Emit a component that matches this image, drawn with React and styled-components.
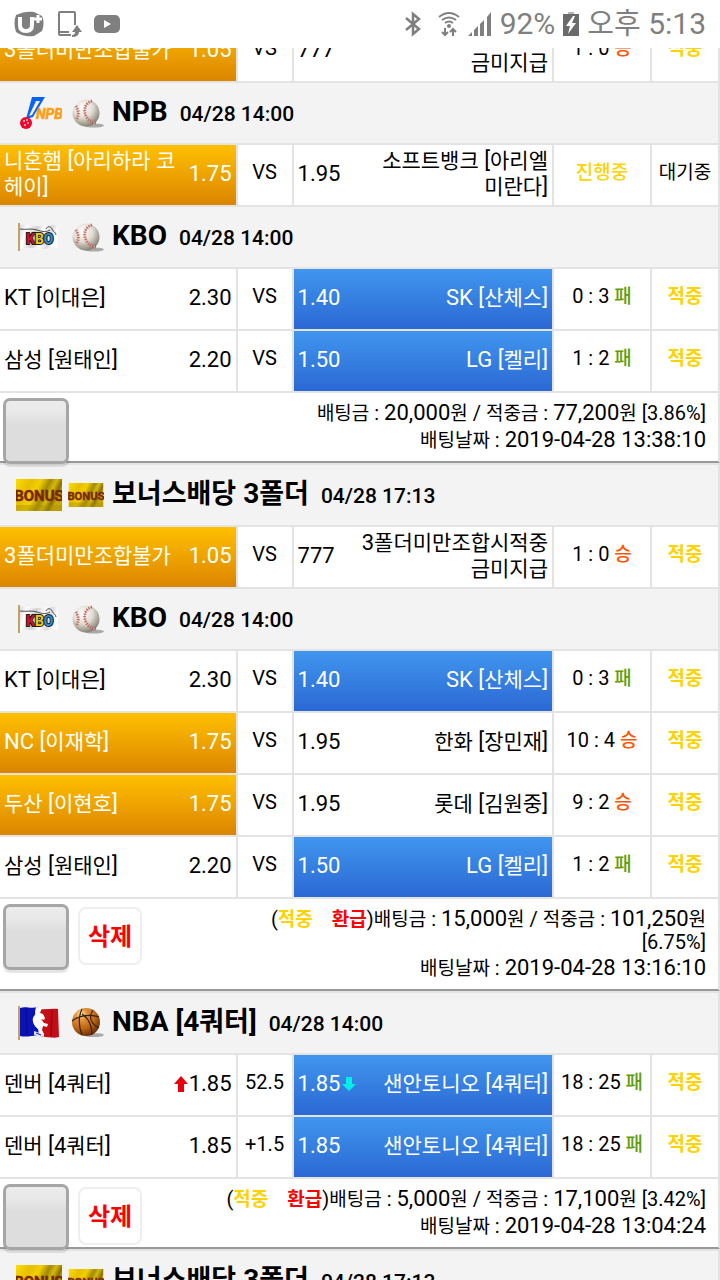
import React from 'react';
import styled, { createGlobalStyle } from 'styled-components';

const colors = {
	line: '#e3e3e3',
	head: '#f3f3f3',
	yellow: '#ffd200',
	red: '#ff0000',
	win: '#ff5500',
	lose: '#5f9c0a',
	bar: '#7f7f7f',
};

const slips = [
	{
		id: 1,
		games: [
			{
				rows: [
					{
						home: ['3폴더미만조합불가', '1.05'],
						away: ['3폴더미만조합시적중금미지급', '777'],
						mid: 'VS',
						score: '1 : 0',
						result: '승',
						pick: 'home',
						status: '적중',
					},
				],
			},
			{
				league: 'NPB',
				date: '04/28 14:00',
				rows: [
					{
						home: ['니혼햄 [아리하라 코헤이]', '1.75'],
						away: ['소프트뱅크 [아리엘 미란다]', '1.95'],
						mid: 'VS',
						pick: 'home',
						status: '대기중',
					},
				],
			},
			{
				league: 'KBO',
				date: '04/28 14:00',
				rows: [
					{
						home: ['KT [이대은]', '2.30'],
						away: ['SK [산체스]', '1.40'],
						mid: 'VS',
						score: '0 : 3',
						result: '패',
						pick: 'away',
						status: '적중',
					},
					{
						home: ['삼성 [원태인]', '2.20'],
						away: ['LG [켈리]', '1.50'],
						mid: 'VS',
						score: '1 : 2',
						result: '패',
						pick: 'away',
						status: '적중',
					},
				],
			},
		],
		bet: '20,000',
		prize: '77,200',
		rate: '3.86',
		betDate: '2019-04-28 13:38:10',
	},
	{
		id: 2,
		games: [
			{
				league: 'BONUS',
				title: '보너스배당 3폴더',
				date: '04/28 17:13',
				rows: [
					{
						home: ['3폴더미만조합불가', '1.05'],
						away: ['3폴더미만조합시적중금미지급', '777'],
						mid: 'VS',
						score: '1 : 0',
						result: '승',
						pick: 'home',
						status: '적중',
					},
				],
			},
			{
				league: 'KBO',
				date: '04/28 14:00',
				rows: [
					{
						home: ['KT [이대은]', '2.30'],
						away: ['SK [산체스]', '1.40'],
						mid: 'VS',
						score: '0 : 3',
						result: '패',
						pick: 'away',
						status: '적중',
					},
					{
						home: ['NC [이재학]', '1.75'],
						away: ['한화 [장민재]', '1.95'],
						mid: 'VS',
						score: '10 : 4',
						result: '승',
						pick: 'home',
						status: '적중',
					},
					{
						home: ['두산 [이현호]', '1.75'],
						away: ['롯데 [김원중]', '1.95'],
						mid: 'VS',
						score: '9 : 2',
						result: '승',
						pick: 'home',
						status: '적중',
					},
					{
						home: ['삼성 [원태인]', '2.20'],
						away: ['LG [켈리]', '1.50'],
						mid: 'VS',
						score: '1 : 2',
						result: '패',
						pick: 'away',
						status: '적중',
					},
				],
			},
		],
		done: true,
		bet: '15,000',
		prize: '101,250',
		rate: '6.75',
		betDate: '2019-04-28 13:16:10',
	},
	{
		id: 3,
		games: [
			{
				league: 'NBA',
				title: 'NBA [4쿼터]',
				date: '04/28 14:00',
				rows: [
					{
						home: ['덴버 [4쿼터]', '1.85', 'up'],
						away: ['샌안토니오 [4쿼터]', '1.85', 'down'],
						mid: '52.5',
						score: '18 : 25',
						result: '패',
						pick: 'away',
						status: '적중',
					},
					{
						home: ['덴버 [4쿼터]', '1.85'],
						away: ['샌안토니오 [4쿼터]', '1.85'],
						mid: '+1.5',
						score: '18 : 25',
						result: '패',
						pick: 'away',
						status: '적중',
					},
				],
			},
		],
		done: true,
		bet: '5,000',
		prize: '17,100',
		rate: '3.42',
		betDate: '2019-04-28 13:04:24',
	},
	{
		id: 4,
		games: [
			{
				league: 'BONUS',
				title: '보너스배당 3폴더',
				date: '04/28 17:13',
				rows: [],
			},
		],
	},
];

// hangul looks too big next to the latin digits, so it gets its own size
const Mixed = ({ text, size }) =>
	text.split(/([가-힣]+)/).map((part, i) =>
		/[가-힣]/.test(part) ? (
			<Hangul size={size} key={i}>
				{part}
			</Hangul>
		) : (
			part
		)
	);

const Baseball = () => (
	<svg width="36" height="32" viewBox="0 0 36 32">
		<defs>
			<radialGradient id="ball" cx="0.38" cy="0.3" r="0.75">
				<stop offset="0" stopColor="#ffffff" />
				<stop offset="0.5" stopColor="#e0dcd3" />
				<stop offset="1" stopColor="#7d786c" />
			</radialGradient>
		</defs>
		<ellipse cx="26" cy="28.5" rx="10" ry="2" fill="#a9a9a9" />
		<circle cx="18" cy="16" r="13.5" fill="url(#ball)" />
		<path
			d="M24 4C17 6 15 13 18 19c2 4 5 6 10 7M8 9c3 5 3 10 0 14"
			fill="none"
			stroke="#d9a79b"
			strokeWidth="1"
		/>
		<path
			d="M24 4C17 6 15 13 18 19c2 4 5 6 10 7M8 9c3 5 3 10 0 14"
			fill="none"
			stroke="#b8453a"
			strokeWidth="3"
			strokeDasharray="1 1.500"
			opacity="0.8"
		/>
	</svg>
);

const Basketball = () => (
	<svg width="36" height="32" viewBox="0 0 36 32">
		<defs>
			<radialGradient id="basket" cx="0.32" cy="0.22" r="0.85">
				<stop offset="0" stopColor="#ffe2ae" />
				<stop offset="0.25" stopColor="#e2923a" />
				<stop offset="0.6" stopColor="#bf6717" />
				<stop offset="1" stopColor="#5d2806" />
			</radialGradient>
		</defs>
		<ellipse cx="26" cy="28" rx="10" ry="2" fill="#a9a9a9" />
		<circle cx="18" cy="15" r="14" fill="url(#basket)" />
		<path
			d="M4 14c8-6 19-7 27-4M14 2c-4 8-3 18 0 26M14 7c6 4 10 12 10 21M25 3c-5 7-2 14 6 18"
			fill="none"
			stroke="#33200f"
			strokeWidth="1.2"
		/>
	</svg>
);

const BonusArt = ({ width, height, id }) => (
	<svg width={width} height={height} viewBox="0 0 46 32">
		<defs>
			<linearGradient id={id} x1="0" y1="0" x2="1" y2="0.35">
				<stop offset="0" stopColor="#ffdc00" />
				<stop offset="0.3" stopColor="#e5bf00" />
				<stop offset="0.5" stopColor="#f3d000" />
				<stop offset="0.68" stopColor="#a08a08" />
				<stop offset="0.8" stopColor="#d8b90a" />
				<stop offset="0.92" stopColor="#857107" />
				<stop offset="1" stopColor="#c9a800" />
			</linearGradient>
		</defs>
		<rect width="46" height="32" fill={`url(#${id})`} />
		<rect y="26" width="46" height="6" fill="#a58b05" opacity="0.4" />
		<NarrowText
			x="23"
			y="22"
			size={15}
			textAnchor="middle"
			fill="#7a2600"
			stroke="#7a2600"
			strokeWidth="0.5">
			BONUS
		</NarrowText>
	</svg>
);

const NpbLogo = () => (
	<svg width="46" height="38" viewBox="0 0 46 38">
		<path d="M16 3h13L17 23l-7 2z" fill="#0a62f5" />
		<path d="M20 7h4l-8 14-3 1z" fill="#f3f3f3" />
		<circle cx="10" cy="29" r="6" fill="#f0052f" />
		<g fill="#ffc3cd">
			<circle cx="8" cy="27" r="1" />
			<circle cx="11" cy="26" r="1" />
			<circle cx="12" cy="29" r="1" />
			<circle cx="9" cy="31" r="1" />
		</g>
		<NarrowText
			x="20"
			y="25"
			size={14}
			fontStyle="italic"
			fill="#ff9c12"
			stroke="#ff9c12"
			strokeWidth="0.5">
			NPB
		</NarrowText>
	</svg>
);

const KboFlag = () => (
	<svg width="46" height="32" viewBox="0 0 46 32">
		<defs>
			<linearGradient id="cloth" x1="0" y1="0" x2="1" y2="0.2">
				<stop offset="0" stopColor="#d8d8d8" />
				<stop offset="0.2" stopColor="#ffffff" />
				<stop offset="0.45" stopColor="#cfcfcf" />
				<stop offset="0.65" stopColor="#ffffff" />
				<stop offset="0.85" stopColor="#dcdcdc" />
				<stop offset="1" stopColor="#ffffff" />
			</linearGradient>
		</defs>
		<path
			d="M4 4c7-2 12 2 20 1s11-2 18 0v22c-7-2-12 2-19 1s-12-2-19 0z"
			fill="url(#cloth)"
		/>
		<rect x="2" y="2" width="2" height="28" fill="#c0a265" />
		<path
			d="M4 8c6 1 12-1 17 1s10 2 13 0M30 8c1-3 5-3 6 0s4 3 4 6"
			fill="none"
			stroke="#4a4a4a"
			strokeWidth="1"
		/>
		<ArtText
			x="10"
			y="23"
			size={14}
			stroke="#1d1d1d"
			strokeWidth="2"
			paintOrder="stroke">
			<tspan fill="#d3122e">K</tspan>
			<tspan fill="#e2cc22">B</tspan>
			<tspan fill="#2b8fd0">O</tspan>
		</ArtText>
	</svg>
);

const NbaFlag = () => (
	<svg width="46" height="36" viewBox="0 0 46 36">
		<path d="M4 3c6-2 10 1 18-1l4 29c-7-2-14 2-22 0z" fill="#0a13b8" />
		<path d="M24 4c6 1 12-1 18 0l1 28c-7 2-12-1-19 0z" fill="#c60d16" />
		<path
			d="M20 2l6 1-2 5 3 1 2 4-1 2-3-1 3 4 4 1-1 3-4-1-1 4 2 4v3l-5-3-1-5c-4-3-6-7-5-11 1-3 3-3 2-6z"
			fill="#ffffff"
		/>
		<path d="M18 26l9 3-1 4-8-3z" fill="#dfe3ff" />
		<path d="M20 28l5 2" stroke="#1019b4" strokeWidth="1" />
		<path d="M10 3l1 28M36 5l-1 26" stroke="#000" strokeWidth="2" opacity="0.2" />
		<rect x="2" y="1" width="2" height="34" fill="#c0a265" />
	</svg>
);

const Arrow = ({ dir }) =>
	dir === 'up' ? (
		<svg width="14" height="16" viewBox="0 0 14 16">
			<path d="M7 0l7 8h-4v8H4V8H0z" fill="#e8000d" />
		</svg>
	) : (
		<svg width="14" height="16" viewBox="0 0 14 16">
			<path d="M4 1h6v7h4l-7 7-7-7h4z" fill="#00f0e8" />
		</svg>
	);

const leagueArt = {
	NPB: [<NpbLogo key="a" />, <Baseball key="b" />],
	KBO: [<KboFlag key="a" />, <Baseball key="b" />],
	NBA: [<NbaFlag key="a" />, <Basketball key="b" />],
	BONUS: [
		<BonusArt key="a" width={46} height={32} id="gold" />,
		<BonusArt key="b" width={36} height={24} id="goldSmall" />,
	],
};

const StatusBar = () => (
	<Bar>
		<BarSide>
			<svg width="30" height="26" viewBox="0 0 30 26" fill={colors.bar}>
				<path d="M2 4C8 1 15 0 20 1l8 4c2 4 2 10 0 15l-8 5C13 26 8 25 2 21 0 15 0 9 2 4z" />
				<path
					d="M6 6v8q0 6 6 6t6-6V6"
					fill="none"
					stroke="#fff"
					strokeWidth="4"
				/>
				<path
					d="M24 4v8M20 8h8"
					stroke="#fff"
					strokeWidth="3"
					fill="none"
				/>
			</svg>
			<svg
				width="26"
				height="28"
				viewBox="0 0 26 28"
				fill="none"
				stroke={colors.bar}
				strokeWidth="2">
				<path d="M19 15V3q0-1-1-1H4Q3 2 3 3v21q0 1 1 1h11M3 22h10" />
				<path
					d="M21 15l5 7h-3q0 5-7 5v-2q3 0 3-3h-3z"
					fill={colors.bar}
					stroke="none"
				/>
			</svg>
			<svg width="26" height="20" viewBox="0 0 26 20">
				<rect y="1" width="26" height="18" rx="5" fill={colors.bar} />
				<path d="M10 6l7 4-7 4z" fill="#fff" />
			</svg>
		</BarSide>
		<BarSide right>
			<svg
				width="18"
				height="26"
				viewBox="0 0 18 26"
				fill="none"
				stroke={colors.bar}
				strokeWidth="2.5">
				<path d="M2 7l13 11-6 5V3l6 5L2 19" />
			</svg>
			<BarGap />
			<svg
				width="22"
				height="26"
				viewBox="0 0 22 26"
				fill="none"
				stroke={colors.bar}
				strokeWidth="2">
				<path d="M1 6q10-8 20 0M4 9q7-5 14 0M7 12q4-3 8 0" />
				<circle cx="11" cy="15" r="1" fill={colors.bar} />
				<path d="M7 17v7M4 21l3 3 3-3M15 25v-7M12 21l3-3 3 3" />
			</svg>
			<svg width="24" height="26" viewBox="0 0 24 26" fill={colors.bar}>
				<path d="M0 25l4-4v4zM6 25v-6l4-4v10zM12 25V13l4-4v16zM19 25V6l4-5v24z" />
			</svg>
			<span>92%</span>
			<svg width="16" height="26" viewBox="0 0 16 26">
				<rect x="5" y="1" width="6" height="2" fill="#b5b5b5" />
				<rect y="3" width="16" height="22" fill="#6b6b6b" />
				<path d="M10 5l-7 10h4l-2 8 8-11H9l3-7z" fill="#fff" />
			</svg>
			<span>
				<Mixed text="오후 5:13" size={29} />
			</span>
		</BarSide>
	</Bar>
);

const Team = ({ team, away, picked }) => {
	const [name, odds, move] = team;
	const price = (
		<Odds>
			{!away && move && <Arrow dir={move} />}
			<span>{odds}</span>
			{away && move && <Arrow dir={move} />}
		</Odds>
	);

	return (
		<TeamCell tone={picked ? (away ? 'blue' : 'gold') : 'none'}>
			<TeamInner away={away}>
				{away && price}
				<TeamName away={away}>
					<Mixed text={name} size={21} />
				</TeamName>
				{!away && price}
			</TeamInner>
		</TeamCell>
	);
};

const Game = ({ game }) => (
	<tbody>
		{game.league && (
			<tr>
				<LeagueCell colSpan={5} scope="colgroup">
					<League>
						<LeagueIcon wide>{leagueArt[game.league][0]}</LeagueIcon>
						<LeagueIcon>{leagueArt[game.league][1]}</LeagueIcon>
						<LeagueTitle>
							<Mixed text={game.title || game.league} size={27} />
							<LeagueDate>{game.date}</LeagueDate>
						</LeagueTitle>
					</League>
				</LeagueCell>
			</tr>
		)}
		{game.rows.map((row, i) => (
			<tr key={i}>
				<Team team={row.home} picked={row.pick === 'home'} />
				<Cell>{row.mid}</Cell>
				<Team team={row.away} away picked={row.pick === 'away'} />
				<Cell>
					{row.score ? (
						<>
							{row.score}{' '}
							<Mark tone={row.result === '승' ? 'win' : 'lose'} weight={500}>
								{row.result}
							</Mark>
						</>
					) : (
						<Mark tone="yellow" weight={500}>
							진행중
						</Mark>
					)}
				</Cell>
				<Cell>
					{row.status === '적중' ? (
						<Mark tone="yellow" weight={700}>
							적중
						</Mark>
					) : (
						<Mark>{row.status}</Mark>
					)}
				</Cell>
			</tr>
		))}
	</tbody>
);

const Slip = ({ slip }) => (
	<section>
		<Games>
			<colgroup>
				<col className="home" />
				<col className="mid" />
				<col className="away" />
				<col className="score" />
				<col className="status" />
			</colgroup>
			{slip.games.map((g, i) => (
				<Game game={g} key={i} />
			))}
		</Games>
		{slip.bet && (
			<Foot>
				<Check type="checkbox" aria-label={`배팅 ${slip.id}`} />
				{slip.done && <Delete type="button">삭제</Delete>}
				<Summary>
					<p>
						{slip.done && (
							<>
								(
								<Mark tone="yellow" weight={700}>
									적중
								</Mark>
								<Refund>환급</Refund>)
							</>
						)}
						<Hangul size={19}>배팅금</Hangul> : <Big>{slip.bet}</Big>
						<Hangul size={19}>원</Hangul> /{' '}
						<Hangul size={19}>적중금</Hangul> : <Big>{slip.prize}</Big>
						<Hangul size={19}>원</Hangul> [{slip.rate}%]
					</p>
					<p>
						<Hangul size={19}>배팅날짜</Hangul> : <Big>{slip.betDate}</Big>
					</p>
				</Summary>
			</Foot>
		)}
	</section>
);

const App = () => (
	<Screen>
		<GlobalStyle />
		<StatusBar />
		<Scroller>
			<List>
				{slips.map((s) => (
					<Slip slip={s} key={s.id} />
				))}
			</List>
		</Scroller>
	</Screen>
);

const GlobalStyle = createGlobalStyle`
	* {
		box-sizing: border-box;
	}
	body {
		margin: 0;
		background: white;
		color: black;
		font-family: Roboto, 'Noto Sans CJK KR', sans-serif;
		font-size: 20px;
	}
	p {
		margin: 0;
	}
	svg {
		display: block;
		flex: none;
	}
`;

const Screen = styled.main`
	height: 100vh;
	display: flex;
	flex-direction: column;
`;

const Bar = styled.header`
	flex: none;
	height: 48px;
	padding: 0 14px;
	display: flex;
	align-items: center;
	justify-content: space-between;
	background: white;
	color: ${colors.bar};
	font-size: 30px;
	line-height: 48px;
`;

const BarSide = styled.div`
	display: flex;
	align-items: center;
	gap: ${({ right }) => (right ? '8px' : '12px')};
`;

const BarGap = styled.span`
	width: 0;
`;

const Scroller = styled.div`
	flex: 1;
	min-height: 0;
	overflow-y: auto;
	scrollbar-width: none;
`;

const List = styled.div`
	margin-top: -29px;
`;

const Games = styled.table`
	width: 100%;
	table-layout: fixed;
	border-collapse: separate;
	border-spacing: 0;
	border-top: 2px solid ${colors.line};
	.home {
		width: 33%;
	}
	.mid {
		width: 56px;
	}
	.score {
		width: 98px;
	}
	.status {
		width: 68px;
	}
`;

const Cell = styled.td`
	height: 62px;
	padding: 0 0 6px;
	border-right: 2px solid ${colors.line};
	border-bottom: 2px solid ${colors.line};
	text-align: center;
	vertical-align: middle;
	line-height: 24px;
	white-space: nowrap;
`;

const tones = {
	gold: 'linear-gradient(#ffc000, #db8500)',
	blue: 'linear-gradient(#4096ee, #2b68d4)',
	none: 'white',
};

const TeamCell = styled(Cell)`
	padding: 0 4px 2px;
	background: ${({ tone }) => tones[tone]} padding-box;
	color: ${({ tone }) => (tone === 'none' ? 'black' : 'white')};
	font-size: 22px;
	line-height: 26px;
	white-space: normal;
`;

const TeamInner = styled.div`
	display: flex;
	align-items: center;
	gap: ${({ away }) => (away ? '18px' : '4px')};
`;

const TeamName = styled.span`
	flex: 1;
	text-align: ${({ away }) => (away ? 'right' : 'left')};
`;

const Odds = styled.span`
	flex: none;
	display: flex;
	align-items: center;
	gap: 1px;
`;

const LeagueCell = styled.th`
	height: 62px;
	padding: 0 16px;
	background: ${colors.head};
	border-right: 2px solid ${colors.line};
	border-bottom: 2px solid ${colors.line};
	text-align: left;
`;

const League = styled.div`
	display: flex;
	align-items: center;
`;

const LeagueIcon = styled.span`
	width: ${({ wide }) => (wide ? '46px' : '36px')};
	margin-right: ${({ wide }) => (wide ? '6px' : '8px')};
`;

const LeagueTitle = styled.span`
	font-size: 28px;
	font-weight: 700;
	line-height: 32px;
`;

const LeagueDate = styled.span`
	margin-left: 12px;
	font-size: 21px;
	font-weight: 500;
`;

const Hangul = styled.span`
	font-size: ${({ size }) => size}px;
`;

const Mark = styled.span`
	font-size: 19px;
	font-weight: ${({ weight }) => weight || 400};
	color: ${({ tone }) => colors[tone] || 'inherit'};
`;

const Foot = styled.div`
	display: flex;
	align-items: flex-start;
	border-right: 2px solid ${colors.line};
	border-bottom: 2px solid #999;
`;

const Check = styled.input`
	appearance: none;
	position: relative;
	z-index: 1;
	flex: none;
	width: 66px;
	height: 66px;
	margin: 5px 9px -8px 3px;
	border: 3px solid #a6a6a6;
	border-radius: 7px;
	background: linear-gradient(#ececec, #e8e8e8 20%, #dddddd 40%);
	box-shadow: 0 3px 1px rgba(0, 0, 0, 0.1);
`;

const Delete = styled.button`
	flex: none;
	width: 64px;
	height: 58px;
	margin-top: 8px;
	padding: 0 0 3px;
	border: 2px solid #eeeeee;
	border-radius: 8px;
	background: white;
	color: ${colors.red};
	font-family: inherit;
	font-size: 24px;
	font-weight: 700;
`;

const Summary = styled.div`
	flex: 1;
	display: flex;
	flex-direction: column;
	gap: 4px;
	padding: 9px 12px 9px 60px;
	text-align: right;
	line-height: 22px;
`;

const Refund = styled.b`
	margin-left: 19px;
	font-size: 19px;
	color: ${colors.red};
`;

const Big = styled.span`
	font-size: 22px;
`;

const ArtText = styled.text`
	font-family: Roboto, sans-serif;
	font-size: ${({ size }) => size}px;
	font-weight: 700;
`;

const NarrowText = styled(ArtText)`
	font-family: 'Liberation Sans Narrow', Roboto, sans-serif;
`;

export default App;
